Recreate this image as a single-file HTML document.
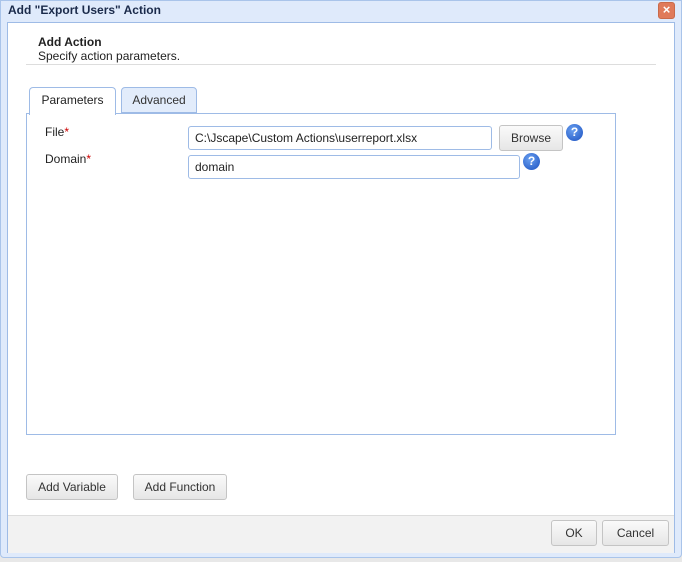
<!DOCTYPE html>
<html><head><style>
*{box-sizing:border-box;margin:0;padding:0}
body{width:682px;height:562px;background:#e8e8e8;font-family:"Liberation Sans",sans-serif;font-size:12px;color:#222;position:relative;overflow:hidden}
.dlg{position:absolute;left:0;top:0;width:682px;height:558px;background:#dfeafb;border:1px solid #a9c4ea;border-radius:0 0 4px 4px}
.title{position:absolute;left:7px;top:2px;font-size:12px;font-weight:bold;color:#1a2a4a}
.close{position:absolute;left:657px;top:1px;width:17px;height:17px;background:#e07a5a;border:1px solid #c96a4a;border-radius:3px;color:#fff;font-weight:bold;font-size:13px;line-height:14px;text-align:center}
.body{position:absolute;left:7px;top:22px;width:668px;height:531px;background:#fff;border:1px solid #9ebbe6}
.in{position:absolute;left:-1px;top:-1px;width:668px;height:531px}
.abs{position:absolute}
.btn{position:absolute;height:26px;border:1px solid #c4c4c4;border-radius:3px;background:linear-gradient(#fafafa,#e6e6e6);font-size:12px;text-align:center;line-height:24px;color:#333}
.inp{position:absolute;height:24px;border:1px solid #9ebbe6;border-radius:3px;padding-left:6px;line-height:22px;font-size:12px;background:#fff}
.help{position:absolute;width:17px;height:17px;border-radius:50%;background:radial-gradient(circle at 40% 35%,#6aa0f0,#1a50c0);color:#fff;font-weight:bold;font-size:12px;text-align:center;line-height:17px}
.req{color:#c00}
</style></head><body>
<div class="dlg">
<div class="title">Add "Export Users" Action</div>
<div class="close">×</div>
</div>
<div class="body"><div class="in">
  <div class="abs" style="left:31px;top:13px;font-weight:bold">Add Action</div>
  <div class="abs" style="left:31px;top:27px">Specify action parameters.</div>
  <div class="abs" style="left:19px;top:42px;width:630px;height:1px;background:#ddd"></div>
  <div class="abs" style="left:22px;top:65px;width:87px;height:28px;border:1px solid #9ebbe6;border-bottom:none;border-radius:4px 4px 0 0;background:#fff;z-index:2;text-align:center;line-height:25px;color:#222">Parameters</div>
  <div class="abs" style="left:114px;top:65px;width:76px;height:26px;border:1px solid #9ebbe6;border-radius:4px 4px 0 0;background:#e2ecfb;text-align:center;line-height:24px;color:#333">Advanced</div>
  <div class="abs" style="left:19px;top:91px;width:590px;height:322px;border:1px solid #9ebbe6"></div>
  <div class="abs" style="left:38px;top:103px">File<span class="req">*</span></div>
  <div class="abs" style="left:38px;top:130px">Domain<span class="req">*</span></div>
  <div class="inp" style="left:181px;top:104px;width:304px">C:\Jscape\Custom Actions\userreport.xlsx</div>
  <div class="btn" style="left:492px;top:103px;width:64px">Browse</div>
  <div class="help" style="left:559px;top:102px">?</div>
  <div class="inp" style="left:181px;top:133px;width:332px">domain</div>
  <div class="help" style="left:516px;top:131px">?</div>
  <div class="btn" style="left:19px;top:452px;width:92px">Add Variable</div>
  <div class="btn" style="left:126px;top:452px;width:94px">Add Function</div>
  <div class="abs" style="left:1px;top:493px;width:666px;height:38px;background:#f2f2f2;border-top:1px solid #ddd"></div>
  <div class="btn" style="left:544px;top:498px;width:46px">OK</div>
  <div class="btn" style="left:595px;top:498px;width:67px">Cancel</div>
</div></div>
</body></html>
